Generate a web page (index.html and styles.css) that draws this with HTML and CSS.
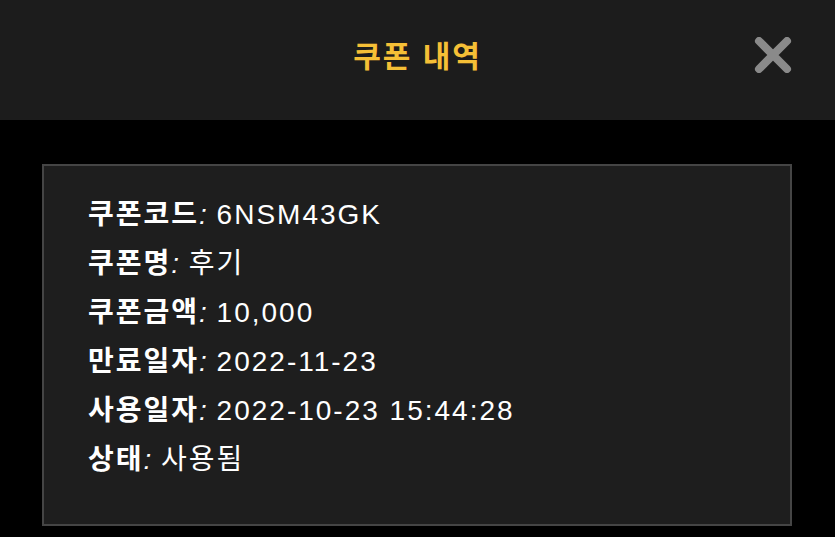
FILE: index.html
```html
<!DOCTYPE html>
<html lang="ko">
<head>
    <meta charset="UTF-8">
    <meta name="viewport" content="width=device-width, initial-scale=1.0">
    <title>쿠폰 내역</title>
    <link rel="stylesheet" href="styles.css">
</head>
<body>
    <div class="header">
        <div class="title">쿠폰 내역</div>
        <div class="close-btn">
            <svg width="38" height="36" viewBox="0 0 38 36">
                <path d="M5 4 L33 32 M33 4 L5 32" stroke="#8a8a8a" stroke-width="8" stroke-linecap="round" fill="none"/>
            </svg>
        </div>
    </div>
    <div class="content">
        <div class="coupon">
            <div class="row"><b>쿠폰코드</b><i>:</i> 6NSM43GK</div>
            <div class="row"><b>쿠폰명</b><i>:</i> 후기</div>
            <div class="row"><b>쿠폰금액</b><i>:</i> 10,000</div>
            <div class="row"><b>만료일자</b><i>:</i> 2022-11-23</div>
            <div class="row"><b>사용일자</b><i>:</i> 2022-10-23 15:44:28</div>
            <div class="row"><b>상태</b><i>:</i> 사용됨</div>
        </div>
    </div>
</body>
</html>
```

FILE: styles.css
```css
body {
    margin: 0;
    padding: 0;
    background: #000;
    font-family: "Liberation Sans", "Noto Sans CJK KR", sans-serif;
    color: #fff;
}
.header {
    height: 120px;
    background: #1c1c1c;
    display: flex;
    align-items: center;
    justify-content: center;
    position: relative;
}
.title {
    color: #f5bf36;
    font-size: 30px;
    font-weight: bold;
    letter-spacing: 2px;
    margin-top: -12px;
}
.close-btn {
    position: absolute;
    right: 43px;
    top: 37px;
    width: 38px;
    height: 36px;
}
.content {
    padding: 44px 43px 0 42px;
}
.coupon {
    background: #1e1e1e;
    border: 2px solid #454545;
    padding: 24px 44px 40px 44px;
}
.row {
    font-size: 28px;
    line-height: 49px;
    letter-spacing: 2px;
}
.row b {
    font-weight: bold;
}
.row i {
    font-style: italic;
    letter-spacing: 0;
}
```
